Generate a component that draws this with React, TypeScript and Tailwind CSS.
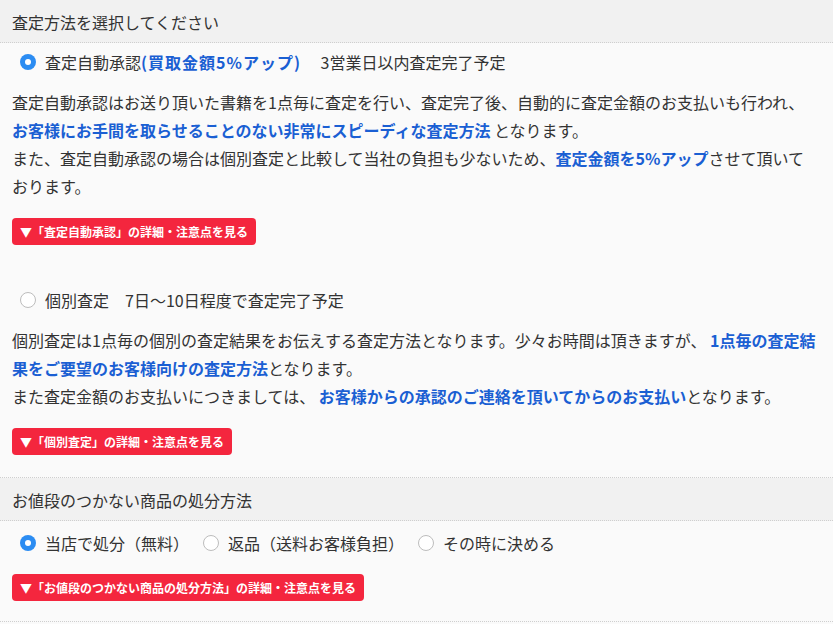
import React from "react";

const FONT = '"Noto Sans CJK JP", "Noto Sans", sans-serif';

function Radio({ checked }: { checked?: boolean }) {
	return checked ? (
		<span className="w-4 h-4 rounded-full bg-[#2b8cf2] flex items-center justify-center shrink-0">
			<span className="w-[6px] h-[6px] rounded-full bg-white" />
		</span>
	) : (
		<span className="w-4 h-4 rounded-full bg-white border border-[#bdbdbd] shrink-0" />
	);
}

function Blue({ children }: { children: React.ReactNode }) {
	return <span className="text-[#1a5fd3] font-bold">{children}</span>;
}

function DetailButton({ label }: { label: string }) {
	return (
		<div>
			<span className="inline-block bg-[#f4263e] text-white font-bold text-[12px] leading-[15px] px-2 py-[6px] rounded-[4px]">
				▼{label}の詳細・注意点を見る
			</span>
		</div>
	);
}

function SectionHeader({ title }: { title: string }) {
	return (
		<div className="h-[43px] flex items-center px-3 pt-px bg-[#f1f1f1] border-b border-dotted border-[#cfcfcf] text-[16px]">
			{title}
		</div>
	);
}

export default function App() {
	return (
		<div
			className="w-[833px] min-h-[624px] bg-[#fafafa] text-[#333] text-[16px]"
			style={{ fontFamily: FONT }}
		>
			{/* 査定方法 */}
			<SectionHeader title="査定方法を選択してください" />
			<div className="px-3 pb-[22px] border-b border-dotted border-[#cfcfcf]">
				<div className="mt-[5px] h-7 flex items-center gap-[9px] pl-2">
					<Radio checked />
					<span>
						{"査定自動承認"}
						<span className="text-[#1a5fd3] font-bold tracking-[1px]">(買取金額5%アップ)</span>
						{"\u3000\u00a03営業日以内査定完了予定"}
					</span>
				</div>
				<p className="mt-3 leading-7">
					査定自動承認はお送り頂いた書籍を1点毎に査定を行い、査定完了後、自動的に査定金額のお支払いも行われ、
					<br />
					<Blue>お客様にお手間を取らせることのない非常にスピーディな査定方法</Blue> となります。
					<br />
					また、査定自動承認の場合は個別査定と比較して当社の負担も少ないため、
					<Blue>査定金額を5%アップ</Blue>させて頂いて
					<br />
					おります。
				</p>
				<div className="mt-[18px]">
					<DetailButton label="「査定自動承認」" />
				</div>

				<div className="mt-[41px] h-7 flex items-center gap-[9px] pl-2">
					<Radio />
					<span>{"個別査定\u30007日〜10日程度で査定完了予定"}</span>
				</div>
				<p className="mt-3 leading-7">
					個別査定は1点毎の個別の査定結果をお伝えする査定方法となります。少々お時間は頂きますが、{" "}
					<Blue>
						1点毎の査定結
						<br />
						果をご要望のお客様向けの査定方法
					</Blue>
					となります。
					<br />
					また査定金額のお支払いにつきましては、{" "}
					<Blue>お客様からの承認のご連絡を頂いてからのお支払い</Blue>となります。
				</p>
				<div className="mt-[18px]">
					<DetailButton label="「個別査定」" />
				</div>
			</div>

			{/* 処分方法 */}
			<SectionHeader title="お値段のつかない商品の処分方法" />
			<div className="px-3 pb-5 border-b border-dotted border-[#cfcfcf]">
				<div className="mt-2 h-7 flex items-center pl-2">
					<label className="flex items-center gap-[9px] mr-[14px]">
						<Radio checked />
						<span>当店で処分（無料）</span>
					</label>
					<label className="flex items-center gap-[9px] mr-[14px]">
						<Radio />
						<span>返品（送料お客様負担）</span>
					</label>
					<label className="flex items-center gap-[9px]">
						<Radio />
						<span>その時に決める</span>
					</label>
				</div>
				<div className="mt-[17px]">
					<DetailButton label="「お値段のつかない商品の処分方法」" />
				</div>
			</div>
		</div>
	);
}
